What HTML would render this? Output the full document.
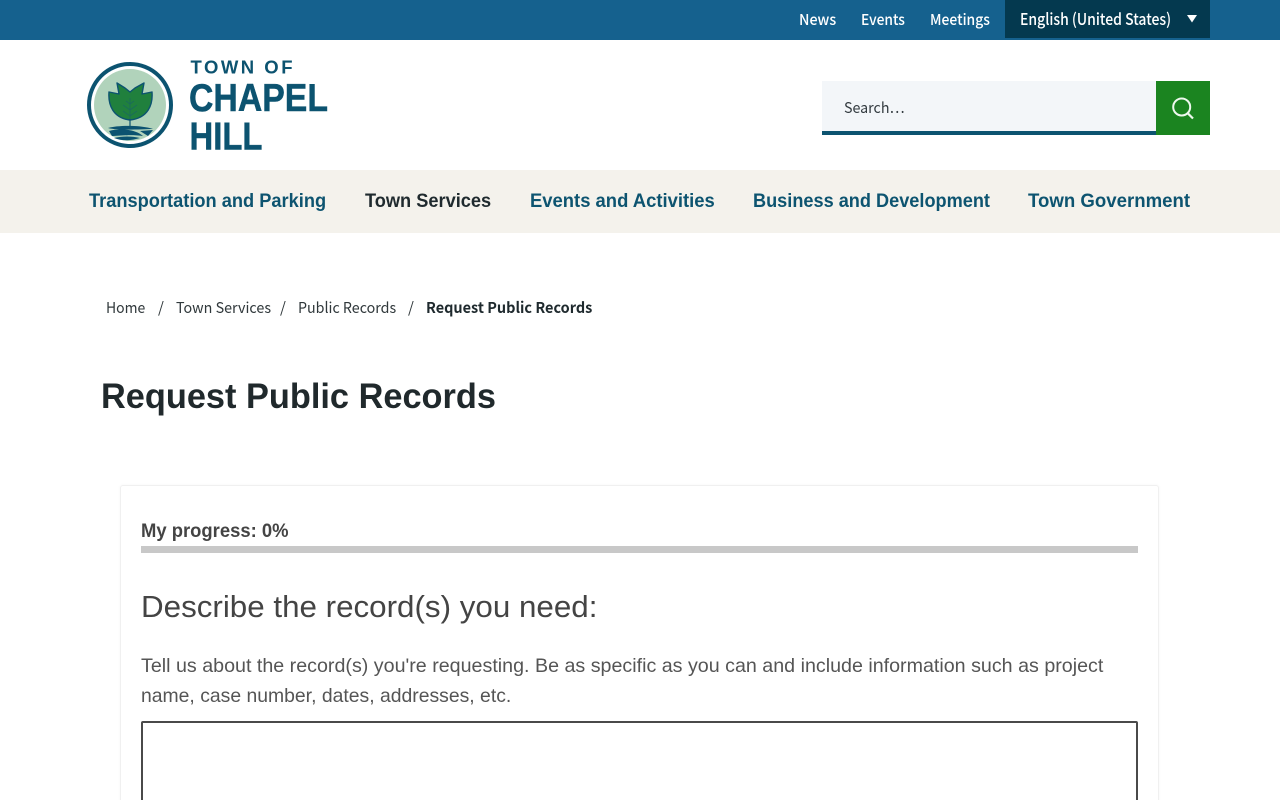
<!DOCTYPE html>
<html lang="en">
<head>
<meta charset="utf-8">
<title>Request Public Records</title>
<style>
html,body{margin:0;padding:0;background:#fff;width:1280px;height:800px;overflow:hidden}
body{position:relative;font-family:"Liberation Sans",sans-serif}
.a{position:absolute;white-space:nowrap;transform-origin:0 50%}
.src{font-family:"Noto Sans CJK JP","Liberation Sans",sans-serif}
.top{left:0;top:0;width:1280px;height:40px;background:#15618e}
.tl{color:#fff;font-size:15px;line-height:20px;top:10px;font-weight:500}
.lang{left:1005px;top:0;width:205px;height:38px;background:#04394f}
.nav{left:0;top:170px;width:1280px;height:63px;background:#f4f2ec}
.ni{top:190px;font-size:19px;line-height:24px;font-weight:bold;color:#0d5470}
.bc{top:298px;font-size:15px;line-height:20px;color:#30383b}
.card{left:120px;top:485px;width:1037px;height:340px;border:1px solid #f0f0f0;border-radius:3px;background:#fff;box-shadow:0 0 3px rgba(0,0,0,.04)}
</style>
</head>
<body>
<div class="a top"></div>
<div class="a tl src" style="left:799px;transform:scaleX(.95)">News</div>
<div class="a tl src" style="left:861px;transform:scaleX(.92)">Events</div>
<div class="a tl src" style="left:930px;transform:scaleX(.925)">Meetings</div>
<div class="a lang"></div>
<div class="a tl src" style="left:1020px;top:8px;font-size:16px;transform:scaleX(.874)">English (United States)</div>
<svg class="a" style="left:1186px;top:14px" width="12" height="9" viewBox="0 0 12 9"><path d="M1 1h10L6 8.500z" fill="#fff"/></svg>

<svg class="a" style="left:80px;top:50px" width="260" height="110" viewBox="0 0 260 110">
<circle cx="50" cy="55" r="41" fill="none" stroke="#0c5370" stroke-width="4"/>
<circle cx="50" cy="55" r="36" fill="#b1d3bb"/>
<path d="M29 42 L39 44 L37 33 L45 38 L50 42 L55 38 L64 33 L62 44 L72 42 C73 55 68 68 50 70 C33 68 28 55 29 42Z" fill="#20803d" stroke="#0c5370" stroke-width="1.400" stroke-linejoin="round"/>
<path d="M50 48V78M50 54l-4-3M50 54l4-3M50 60l-7-5M50 60l7-5M50 66l-7-5M50 66l7-5" stroke="#1a6a5c" stroke-width=".8" fill="none"/>
<path d="M50 69V78" stroke="#0c5370" stroke-width="1.200" fill="none"/>
<path d="M28 78C38 75 62 75 73 79C62 79 40 81 28 78Z" fill="#0c5370"/>
<path d="M29 81C40 78 55 79 63 86C50 84 38 86 32 86Z" fill="#0c5370"/>
<path d="M60 81L73 80L68 86Z M34 88C42 86 52 86 60 88C50 91 42 91 34 88Z" fill="#0c5370"/>
<text x="110.500" y="23.500" font-family="Liberation Sans,sans-serif" font-weight="bold" font-size="18.500" fill="#0c5370" textLength="102" lengthAdjust="spacing">TOWN OF</text>
<text x="109" y="61" font-family="Liberation Sans,sans-serif" font-weight="bold" font-size="39" fill="#0c5370" stroke="#0c5370" stroke-width=".5" textLength="139" lengthAdjust="spacingAndGlyphs">CHAPEL</text>
<text x="109.500" y="99.500" font-family="Liberation Sans,sans-serif" font-weight="bold" font-size="39" fill="#0c5370" stroke="#0c5370" stroke-width=".5" textLength="73" lengthAdjust="spacingAndGlyphs">HILL</text>
</svg>

<div class="a" style="left:822px;top:81px;width:334px;height:50px;background:#f3f6f9;border-bottom:4px solid #0c5370"></div>
<div class="a src" style="left:844px;top:98px;font-size:15px;line-height:20px;color:#333b40;transform:scaleX(.95)">Search…</div>
<div class="a" style="left:1156px;top:81px;width:54px;height:54px;background:#1b8420"></div>
<svg class="a" style="left:1170px;top:95px" width="26" height="26" viewBox="0 0 26 26"><circle cx="11.700" cy="12" r="8.500" fill="none" stroke="#eef8ee" stroke-width="2"/><path d="M17.800 18.300l5.200 5.200" stroke="#eef8ee" stroke-width="2.200" fill="none"/></svg>

<div class="a nav"></div>
<div class="a ni" style="left:89px;transform:scaleX(.96)">Transportation and Parking</div>
<div class="a ni" style="left:365px;color:#1f2a2e;transform:scaleX(.958)">Town Services</div>
<div class="a ni" style="left:529.500px;transform:scaleX(.97)">Events and Activities</div>
<div class="a ni" style="left:752.500px;transform:scaleX(.955)">Business and Development</div>
<div class="a ni" style="left:1028px;transform:scaleX(.98)">Town Government</div>

<div class="a bc src" style="left:106px;transform:scaleX(.93)">Home</div>
<div class="a bc src" style="left:158px">/</div>
<div class="a bc src" style="left:176px;transform:scaleX(.955)">Town Services</div>
<div class="a bc src" style="left:280px">/</div>
<div class="a bc src" style="left:298px;transform:scaleX(.95)">Public Records</div>
<div class="a bc src" style="left:408px">/</div>
<div class="a bc src" style="left:426px;font-weight:bold;color:#1f2a2e;transform:scaleX(.965)">Request Public Records</div>

<div class="a" style="left:101px;top:375px;font-size:35px;line-height:44px;font-weight:bold;color:#20292c;transform:scaleX(.981)">Request Public Records</div>

<div class="a card"></div>
<div class="a" style="left:141px;top:520px;font-size:19px;line-height:24px;font-weight:bold;color:#444;transform:scaleX(.97)">My progress: 0%</div>
<div class="a" style="left:141px;top:546px;width:997px;height:7px;background:#c8c8c8"></div>
<div class="a" style="left:141px;top:587px;font-size:31px;line-height:40px;color:#444;transform:scaleX(1.011)">Describe the record(s) you need:</div>
<div class="a" style="left:141px;top:651px;font-size:19.500px;line-height:30px;color:#555;transform:scaleX(1.0084)">Tell us about the record(s) you're requesting. Be as specific as you can and include information such as project</div>
<div class="a" style="left:141px;top:681px;font-size:19.500px;line-height:30px;color:#555;transform:scaleX(.993)">name, case number, dates, addresses, etc.</div>
<div class="a" style="left:141px;top:721px;width:993px;height:100px;border:2px solid #4a4a4a;border-radius:2px;background:#fff"></div>
</body>
</html>
